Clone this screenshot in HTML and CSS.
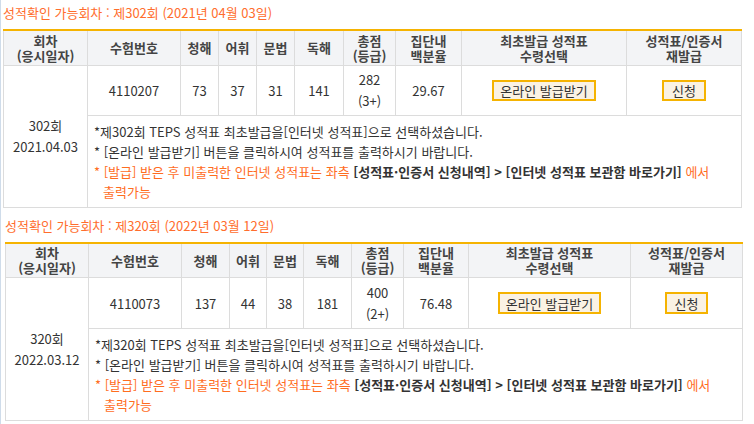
FILE: index.html
```html
<!DOCTYPE html>
<html lang="ko">
<head>
  <meta charset="UTF-8">
  <title>성적확인</title>
  <link rel="stylesheet" href="styles.css">
</head>
<body>

<!-- 302회 -->
<div class="round round-302">
  <p class="round-title">성적확인 가능회차 : 제302회 (2021년 04월 03일)</p>
  <table class="score-table">
    <colgroup>
      <col class="c-round"><col class="c-no"><col class="c-ls"><col class="c-vo"><col class="c-gr"><col class="c-rc">
      <col class="c-total"><col class="c-pct"><col class="c-issue"><col class="c-re">
    </colgroup>
    <tr class="head">
      <th>회차<br>(응시일자)</th>
      <th>수험번호</th>
      <th>청해</th>
      <th>어휘</th>
      <th>문법</th>
      <th>독해</th>
      <th>총점<br>(등급)</th>
      <th>집단내<br>백분율</th>
      <th>최초발급 성적표<br>수령선택</th>
      <th>성적표/인증서<br>재발급</th>
    </tr>
    <tr class="scores">
      <td rowspan="2" class="date">302회<br>2021.04.03</td>
      <td>4110207</td>
      <td>73</td>
      <td>37</td>
      <td>31</td>
      <td>141</td>
      <td class="total">282<br>(3+)</td>
      <td>29.67</td>
      <td><button class="btn btn-wide">온라인 발급받기</button></td>
      <td><button class="btn">신청</button></td>
    </tr>
    <tr>
      <td colspan="9" class="notes">
        <ul>
          <li class="first">*제302회 TEPS 성적표 최초발급을[인터넷 성적표]으로 선택하셨습니다.</li>
          <li>* [온라인 발급받기] 버튼을 클릭하시여 성적표를 출력하시기 바랍니다.</li>
          <li class="warn">* [발급] 받은 후 미출력한 인터넷 성적표는 좌측 <b>[성적표·인증서 신청내역] &gt; [인터넷 성적표 보관함 바로가기]</b> 에서<br>출력가능</li>
        </ul>
      </td>
    </tr>
  </table>
</div>

<!-- 320회 -->
<div class="round round-320">
  <p class="round-title">성적확인 가능회차 : 제320회 (2022년 03월 12일)</p>
  <table class="score-table">
    <colgroup>
      <col class="c-round"><col class="c-no"><col class="c-ls"><col class="c-vo"><col class="c-gr"><col class="c-rc">
      <col class="c-total"><col class="c-pct"><col class="c-issue"><col class="c-re">
    </colgroup>
    <tr class="head">
      <th>회차<br>(응시일자)</th>
      <th>수험번호</th>
      <th>청해</th>
      <th>어휘</th>
      <th>문법</th>
      <th>독해</th>
      <th>총점<br>(등급)</th>
      <th>집단내<br>백분율</th>
      <th>최초발급 성적표<br>수령선택</th>
      <th>성적표/인증서<br>재발급</th>
    </tr>
    <tr class="scores">
      <td rowspan="2" class="date">320회<br>2022.03.12</td>
      <td>4110073</td>
      <td>137</td>
      <td>44</td>
      <td>38</td>
      <td>181</td>
      <td class="total">400<br>(2+)</td>
      <td>76.48</td>
      <td><button class="btn btn-wide">온라인 발급받기</button></td>
      <td><button class="btn">신청</button></td>
    </tr>
    <tr>
      <td colspan="9" class="notes">
        <ul>
          <li class="first">*제320회 TEPS 성적표 최초발급을[인터넷 성적표]으로 선택하셨습니다.</li>
          <li>* [온라인 발급받기] 버튼을 클릭하시여 성적표를 출력하시기 바랍니다.</li>
          <li class="warn">* [발급] 받은 후 미출력한 인터넷 성적표는 좌측 <b>[성적표·인증서 신청내역] &gt; [인터넷 성적표 보관함 바로가기]</b> 에서<br>출력가능</li>
        </ul>
      </td>
    </tr>
  </table>
</div>

</body>
</html>
```

FILE: styles.css
```css
* { box-sizing: border-box; }

body {
  margin: 0;
  min-height: 424px;
  font-family: "Noto Sans CJK KR", "Noto Sans", sans-serif;
  font-size: 13px;
  color: #333;
  background: #fff;
  border-left: 1px solid #cfdcea;
}

.round {
  padding-left: 2px;
}

.round-302 {
  padding-top: 3px;
}

.round-320 {
  padding-top: 8px;
  padding-left: 4px;
}

.round-title {
  margin: 0 0 6px;
  line-height: 20px;
  color: #ff6d2d;
}

.score-table {
  border-collapse: collapse;
  table-layout: fixed;
  border-top: 2px solid #f5b301;
}

.round-302 .score-table { width: 738px; }
.round-320 .score-table { width: 737px; }

/* column widths */
.round-302 .c-round { width: 84px; }
.round-302 .c-no { width: 93px; }
.round-302 .c-ls,
.round-302 .c-vo,
.round-302 .c-gr { width: 38px; }
.round-302 .c-rc { width: 49px; }
.round-302 .c-total { width: 52px; }
.round-302 .c-pct { width: 66px; }
.round-302 .c-issue { width: 165px; }
.round-302 .c-re { width: 115px; }

.round-320 .c-round { width: 83px; }
.round-320 .c-no { width: 93px; }
.round-320 .c-ls { width: 48px; }
.round-320 .c-vo,
.round-320 .c-gr { width: 37px; }
.round-320 .c-rc { width: 48px; }
.round-320 .c-total { width: 52px; }
.round-320 .c-pct { width: 65px; }
.round-320 .c-issue { width: 162px; }
.round-320 .c-re { width: 112px; }

.score-table th,
.score-table td {
  border: 1px solid #dcdcdc;
  padding: 0;
  text-align: center;
  vertical-align: middle;
}

.score-table tr:first-child th {
  border-top: none;
}

.head th {
  height: 35px;
  background: #f3f4f6;
  line-height: 15px;
  font-weight: bold;
  color: #444;
}

.scores td {
  height: 50px;
  line-height: 21px;
}

.round-320 .scores td { height: 51px; }

.date {
  line-height: 20px;
}

.btn {
  height: 21px;
  padding: 0 8px;
  font-family: inherit;
  font-size: 13px;
  line-height: 17px;
  color: #333;
  background: #faf2e4;
  border: 2px solid #f5b301;
  border-radius: 0;
}

.btn-wide {
  padding: 0 6px;
}

.round-320 .btn { height: 22px; }

.score-table .notes {
  text-align: left;
  vertical-align: top;
  padding: 6px 6px 5px 6px;
}

.notes ul {
  margin: 0;
  padding: 0;
  list-style: none;
}

.notes li {
  line-height: 20px;
  padding-left: 9px;
  text-indent: -9px;
}

.notes li.warn {
  color: #ff6d1f;
}

.notes li.warn b {
  color: #333;
}
```
